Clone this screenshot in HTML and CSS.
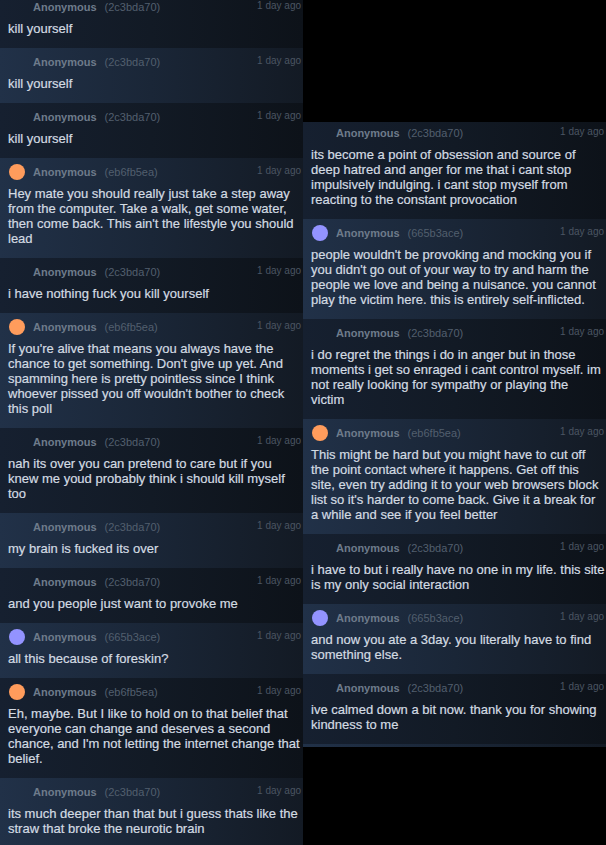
FILE: index.html
```html
<!DOCTYPE html>
<html>
<head>
<meta charset="utf-8">
<link rel="stylesheet" href="styles.css">
</head>
<body>
<div class="page">
  <div class="col col-left">
    <div class="comment"><div class="head"><span class="avatar"></span><span class="name">Anonymous</span><span class="hash">(2c3bda70)</span><span class="date">1 day ago</span></div><div class="text">kill yourself</div></div>
    <div class="comment"><div class="head"><span class="avatar"></span><span class="name">Anonymous</span><span class="hash">(2c3bda70)</span><span class="date">1 day ago</span></div><div class="text">kill yourself</div></div>
    <div class="comment"><div class="head"><span class="avatar"></span><span class="name">Anonymous</span><span class="hash">(2c3bda70)</span><span class="date">1 day ago</span></div><div class="text">kill yourself</div></div>
    <div class="comment"><div class="head"><span class="avatar orange"></span><span class="name">Anonymous</span><span class="hash">(eb6fb5ea)</span><span class="date">1 day ago</span></div><div class="text">Hey mate you should really just take a step away from the computer. Take a walk, get some water, then come back. This ain't the lifestyle you should lead</div></div>
    <div class="comment"><div class="head"><span class="avatar"></span><span class="name">Anonymous</span><span class="hash">(2c3bda70)</span><span class="date">1 day ago</span></div><div class="text">i have nothing fuck you kill yourself</div></div>
    <div class="comment"><div class="head"><span class="avatar orange"></span><span class="name">Anonymous</span><span class="hash">(eb6fb5ea)</span><span class="date">1 day ago</span></div><div class="text">If you're alive that means you always have the chance to get something. Don't give up yet. And spamming here is pretty pointless since I think whoever pissed you off wouldn't bother to check this poll</div></div>
    <div class="comment"><div class="head"><span class="avatar"></span><span class="name">Anonymous</span><span class="hash">(2c3bda70)</span><span class="date">1 day ago</span></div><div class="text">nah its over you can pretend to care but if you knew me youd probably think i should kill myself too</div></div>
    <div class="comment"><div class="head"><span class="avatar"></span><span class="name">Anonymous</span><span class="hash">(2c3bda70)</span><span class="date">1 day ago</span></div><div class="text">my brain is fucked its over</div></div>
    <div class="comment"><div class="head"><span class="avatar"></span><span class="name">Anonymous</span><span class="hash">(2c3bda70)</span><span class="date">1 day ago</span></div><div class="text">and you people just want to provoke me</div></div>
    <div class="comment"><div class="head"><span class="avatar purple"></span><span class="name">Anonymous</span><span class="hash">(665b3ace)</span><span class="date">1 day ago</span></div><div class="text">all this because of foreskin?</div></div>
    <div class="comment"><div class="head"><span class="avatar orange"></span><span class="name">Anonymous</span><span class="hash">(eb6fb5ea)</span><span class="date">1 day ago</span></div><div class="text">Eh, maybe. But I like to hold on to that belief that everyone can change and deserves a second chance, and I'm not letting the internet change that belief.</div></div>
    <div class="comment"><div class="head"><span class="avatar"></span><span class="name">Anonymous</span><span class="hash">(2c3bda70)</span><span class="date">1 day ago</span></div><div class="text">its much deeper than that but i guess thats like the straw that broke the neurotic brain</div></div>
  </div>
  <div class="right-wrap">
    <div class="col col-right">
      <div class="comment"><div class="head"><span class="avatar"></span><span class="name">Anonymous</span><span class="hash">(2c3bda70)</span><span class="date">1 day ago</span></div><div class="text">its become a point of obsession and source of deep hatred and anger for me that i cant stop impulsively indulging. i cant stop myself from reacting to the constant provocation</div></div>
      <div class="comment"><div class="head"><span class="avatar purple"></span><span class="name">Anonymous</span><span class="hash">(665b3ace)</span><span class="date">1 day ago</span></div><div class="text">people wouldn't be provoking and mocking you if you didn't go out of your way to try and harm the people we love and being a nuisance. you cannot play the victim here. this is entirely self-inflicted.</div></div>
      <div class="comment"><div class="head"><span class="avatar"></span><span class="name">Anonymous</span><span class="hash">(2c3bda70)</span><span class="date">1 day ago</span></div><div class="text">i do regret the things i do in anger but in those moments i get so enraged i cant control myself. im not really looking for sympathy or playing the victim</div></div>
      <div class="comment"><div class="head"><span class="avatar orange"></span><span class="name">Anonymous</span><span class="hash">(eb6fb5ea)</span><span class="date">1 day ago</span></div><div class="text">This might be hard but you might have to cut off the point contact where it happens. Get off this site, even try adding it to your web browsers block list so it's harder to come back. Give it a break for a while and see if you feel better</div></div>
      <div class="comment"><div class="head"><span class="avatar"></span><span class="name">Anonymous</span><span class="hash">(2c3bda70)</span><span class="date">1 day ago</span></div><div class="text">i have to but i really have no one in my life. this site is my only social interaction</div></div>
      <div class="comment"><div class="head"><span class="avatar purple"></span><span class="name">Anonymous</span><span class="hash">(665b3ace)</span><span class="date">1 day ago</span></div><div class="text">and now you ate a 3day. you literally have to find something else.</div></div>
      <div class="comment"><div class="head"><span class="avatar"></span><span class="name">Anonymous</span><span class="hash">(2c3bda70)</span><span class="date">1 day ago</span></div><div class="text">ive calmed down a bit now. thank you for showing kindness to me</div></div>
      <div class="comment comment-stub"></div>
    </div>
  </div>
</div>
</body>
</html>
```
FILE: styles.css
```css
html, body {
  margin: 0;
  padding: 0;
  background: #000;
  overflow: hidden;
}
body {
  width: 606px;
  height: 845px;
  font-family: Arial, "Liberation Sans", sans-serif;
}
.page {
  display: flex;
  align-items: flex-start;
  width: 606px;
  height: 845px;
  overflow: hidden;
}
.col {
  display: flex;
  flex-direction: column;
  width: 303px;
}
.col-left {
  margin-top: -7px;
}
.right-wrap {
  width: 303px;
  margin-top: 122px;
  height: 625px;
  overflow: hidden;
}
.col-right {
  margin-top: -3px;
}
.comment {
  padding: 6px 1.3px 12px 8px;
  background: linear-gradient(90deg, #162030 0%, #121a25 50%, #0d1219 100%);
}
.comment:nth-child(even) {
  background: linear-gradient(90deg, #213148 0%, #1a2637 50%, #131a24 100%);
}
.comment-stub {
  height: 40px;
}
.head {
  display: flex;
  align-items: center;
  height: 16px;
  margin-bottom: 6px;
  margin-right: 0.7px;
}
.avatar {
  width: 16px;
  height: 16px;
  margin-left: 1px;
  margin-right: 8px;
  border-radius: 50%;
  flex: none;
}
.avatar.orange { background: #ff9c5c; }
.avatar.purple { background: #9393ff; }
.name {
  font-size: 11px;
  font-weight: bold;
  color: #6e7b8b;
}
.hash {
  font-size: 11px;
  color: #525f6e;
  margin-left: 8px;
}
.date {
  margin-left: auto;
  align-self: flex-start;
  font-size: 10px;
  line-height: 12px;
  margin-top: 1px;
  color: #4b5562;
}
.text {
  font-size: 13px;
  line-height: 15px;
  color: #d3dbe2;
  -webkit-text-stroke: 0.2px #d3dbe2;
}
```
